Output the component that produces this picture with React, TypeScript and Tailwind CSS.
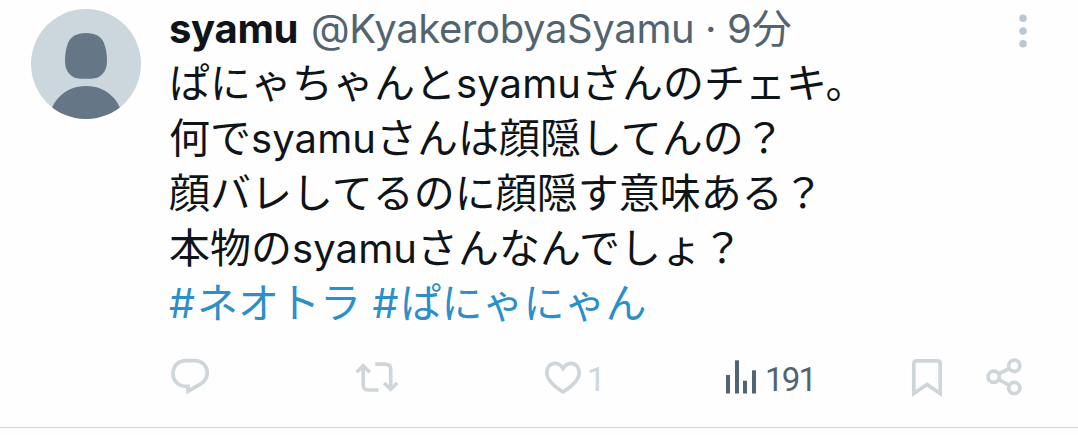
import { FC, ReactNode } from "react";

const Avatar: FC = () => (
  <svg viewBox="0 0 110 110" className="h-[110px] w-[110px] shrink-0">
    <defs>
      <clipPath id="avatar">
        <circle cx="55" cy="55" r="55" />
      </clipPath>
    </defs>
    <g clipPath="url(#avatar)">
      <rect width="110" height="110" fill="#ccd6dd" />
      <path
        d="M55 24C64 24 70.5 27.5 73 34C75 39.5 76 45 76 52C76 62.5 70 69.7 60.5 69.7H49.5C40 69.7 34 62.5 34 52C34 45 35 39.5 37 34C39.5 27.5 46 24 55 24Z"
        fill="#657786"
      />
      <path
        d="M18 110C20 93 33 77 55 77S90 93 92 110Z"
        fill="#657786"
      />
    </g>
  </svg>
);

const MoreIcon: FC = () => (
  <svg viewBox="0 0 10 36" className="h-9 w-[10px]" fill="#b9c8d1">
    <circle cx="5" cy="5.3" r="3.8" />
    <circle cx="5" cy="18" r="3.8" />
    <circle cx="5" cy="30.7" r="3.8" />
  </svg>
);

type IconProps = {
  children: ReactNode;
};

const Icon: FC<IconProps> = ({ children }) => (
  <svg
    viewBox="0 0 44 44"
    className="h-11 w-11 shrink-0"
    fill="none"
    stroke="#cfd6da"
    strokeWidth="3.7"
  >
    {children}
  </svg>
);

const Latin: FC<IconProps> = ({ children }) => (
  <span className="text-[40px] tracking-[0.1px]">{children}</span>
);

const Tweet: FC = () => (
  <article className="flex h-[428px] border-b border-[#cfd6da] pl-[31px] font-['Inter','Noto_Sans_CJK_JP',sans-serif] text-[#0f1419]">
    <div className="pt-[9px]">
      <Avatar />
    </div>
    <div className="ml-[28px] w-[860px] pt-px">
      <header className="flex h-[55px] items-start justify-between text-[40px] leading-[55px] whitespace-pre text-[#536471]">
        <div className="flex">
          <span className="w-[142px] font-bold tracking-[-0.3px] text-[#0f1419]">syamu</span>
          <span className="w-[394px] tracking-[-0.35px]">@KyakerobyaSyamu</span>
          <span className="w-[22px]">·</span>
          <span>9分</span>
        </div>
        <button type="button" className="mt-3 mr-[1px]">
          <MoreIcon />
        </button>
      </header>

      <div className="text-[41px] leading-[55px] whitespace-nowrap">
        <p className="h-[55px]">
          ぱにゃちゃんと<Latin>syamu</Latin>さんのチェキ。
        </p>
        <p className="h-[55px]">
          何で<Latin>syamu</Latin>さんは顔隠してんの？
        </p>
        <p className="h-[55px]">顔バレしてるのに顔隠す意味ある？</p>
        <p className="h-[55px]">
          本物の<Latin>syamu</Latin>さんなんでしょ？
        </p>
        <p className="h-[55px] text-[#2c8fc9]">
          <a>
            <span className="tracking-[2px]">#</span>ネオトラ
          </a>{" "}
          <a>
            <span className="tracking-[2px]">#</span>ぱにゃにゃん
          </a>
        </p>
      </div>

      <footer className="mt-[25px] flex h-11 items-center font-['Roboto',sans-serif] text-[33px] tracking-[-1.8px]">
        <div className="w-[186px]">
          <Icon>
            <path d="M19 30.3H17C9.5 30.3 4 25 4 17.4C4 9.9 9.6 4.6 17 4.6H25.5C32.8 4.6 38.2 9.9 38.2 16.8C38.2 21.8 35.5 25.8 31.3 28.2L19 35.2Z" />
          </Icon>
        </div>
        <div className="w-[188px]">
          <Icon>
            <path d="M1.6 16.3L8.2 9.8L14.8 16.3" />
            <path d="M8.2 10V29C8.2 33 10 34 14 34H23.5" />
            <path d="M20.3 8.1H30C34 8.1 35.7 9.5 35.7 13V33" />
            <path d="M29.1 27L35.7 33.3L42.3 27" />
          </Icon>
        </div>
        <div className="flex w-[182px] items-center text-[#cfd6da]">
          <Icon>
            <path d="M20 36C9 29 3.8 22.5 3.8 16.5C3.8 11 7.5 7.3 12 7.3C15.5 7.3 18 9 20 12.4C22 9 24.5 7.3 28 7.3C32.5 7.3 36.2 11 36.2 16.5C36.2 22.5 31 29 20 36Z" />
          </Icon>
          <span className="pt-[3px]">1</span>
        </div>
        <div className="flex w-[184px] items-center text-[#536471]">
          <svg viewBox="0 0 40 44" className="h-11 w-10 shrink-0" fill="#536471">
            <rect x="1" y="19" width="4" height="18.5" />
            <rect x="10" y="4.3" width="4" height="33.2" />
            <rect x="18" y="24.7" width="4" height="12.8" />
            <rect x="27" y="14.3" width="4" height="23.2" />
          </svg>
          <span className="pt-[3px]">191</span>
        </div>
        <div className="w-[75px]">
          <Icon>
            <path d="M4.8 37.5V7.7C4.8 5.8 5.8 4.8 7.7 4.8H28.3C30.2 4.8 31.2 5.8 31.2 7.7V37.5L18 28.4Z" />
          </Icon>
        </div>
        <Icon>
          <circle cx="9.7" cy="20.7" r="5.6" />
          <circle cx="30.3" cy="9.7" r="5.6" />
          <circle cx="30.3" cy="32" r="5.6" />
          <path d="M14.7 18L25.3 12.4M14.7 23.4L25.3 29.3" />
        </Icon>
      </footer>
    </div>
  </article>
);

const App: FC = () => (
  <main className="h-[435px] w-[1078px] overflow-hidden bg-[#fefefe]">
    <Tweet />
  </main>
);

export default App;
